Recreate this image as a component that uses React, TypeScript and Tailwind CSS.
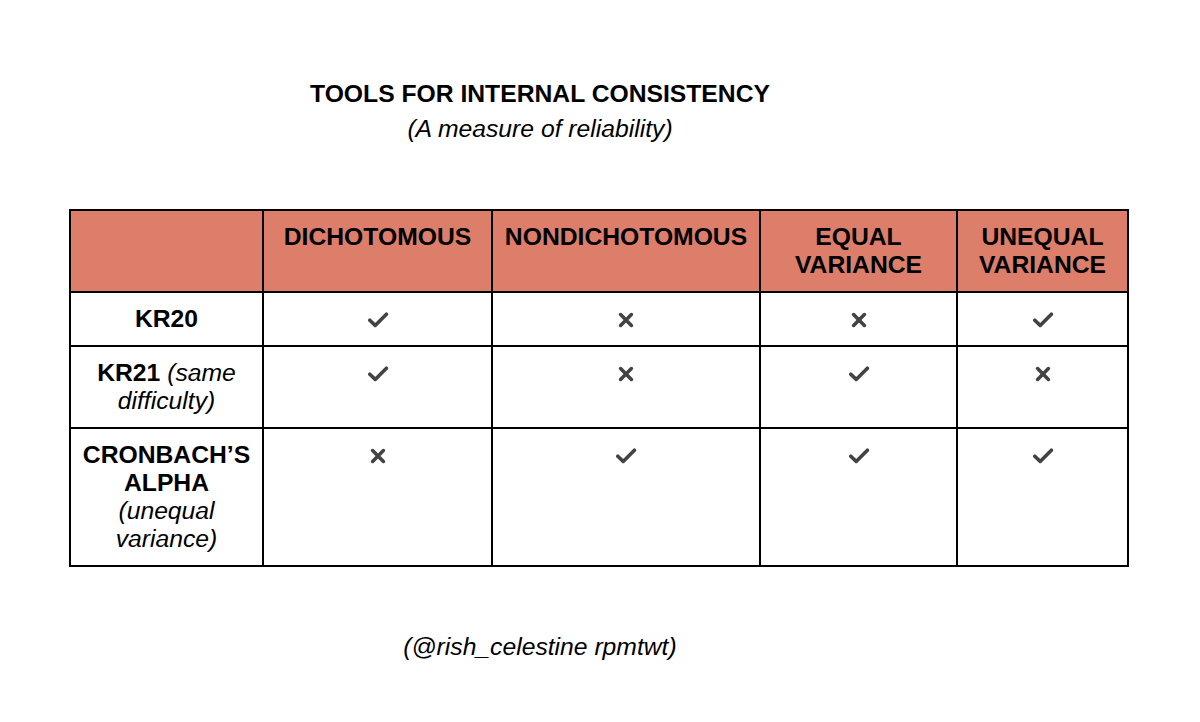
import React from "react";

const Check = () => (
  <svg width="22" height="16" viewBox="0 0 22 16" className="inline-block" aria-hidden>
    <polyline
      points="2.8,8.2 8.2,13.4 19.4,2.2"
      fill="none"
      stroke="#434343"
      strokeWidth="3.6"
      strokeLinecap="round"
      strokeLinejoin="round"
    />
  </svg>
);

const Cross = () => (
  <svg width="16" height="16" viewBox="0 0 16 16" className="inline-block" aria-hidden>
    <path d="M2.6 2.6 L13.4 13.4 M13.4 2.6 L2.6 13.4" stroke="#434343" strokeWidth="3.6" strokeLinecap="round" />
  </svg>
);

const Mark = ({ ok }: { ok: boolean }) => (
  <div className="h-[28px] flex items-center justify-center pt-[2px]">{ok ? <Check /> : <Cross />}</div>
);

const headCell = "bg-[#dd7e6b] px-[6px] pt-[12px] pb-[12px] text-center font-bold text-black";
const bodyCell = "bg-white px-[6px] pt-[12px] pb-[12px] text-center text-black";

const rows: { label: React.ReactNode; marks: boolean[] }[] = [
  { label: <span className="font-bold">KR20</span>, marks: [true, false, false, true] },
  {
    label: (
      <>
        <span className="font-bold">KR21</span> <span className="italic">(same</span>
        <br />
        <span className="italic">difficulty)</span>
      </>
    ),
    marks: [true, false, true, false],
  },
  {
    label: (
      <>
        <span className="font-bold">CRONBACH’S</span>
        <br />
        <span className="font-bold">ALPHA</span>
        <br />
        <span className="italic">(unequal</span>
        <br />
        <span className="italic">variance)</span>
      </>
    ),
    marks: [false, true, true, true],
  },
];

export default function App() {
  return (
    <div
      className="w-[1200px] h-[722px] bg-white text-black text-[24.7px] leading-[28px]"
      style={{ fontFamily: '"Liberation Sans", Arial, sans-serif' }}
    >
      <div className="pt-[80px] pr-[120px] text-center">
        <div className="font-bold">TOOLS FOR INTERNAL CONSISTENCY</div>
        <div className="italic mt-[7px]">(A measure of reliability)</div>
      </div>

      <div className="mt-[66px] ml-[69px] w-[1060px] bg-black p-[2px] grid grid-cols-[191px_227px_266px_195px_169px] gap-[2px]">
        <div className={headCell}></div>
        <div className={headCell}>DICHOTOMOUS</div>
        <div className={headCell}>NONDICHOTOMOUS</div>
        <div className={headCell}>
          EQUAL
          <br />
          VARIANCE
        </div>
        <div className={headCell}>
          UNEQUAL
          <br />
          VARIANCE
        </div>

        {rows.map((r, i) => (
          <React.Fragment key={i}>
            <div className={bodyCell}>{r.label}</div>
            {r.marks.map((m, j) => (
              <div key={j} className={bodyCell}>
                <Mark ok={m} />
              </div>
            ))}
          </React.Fragment>
        ))}
      </div>

      <div className="mt-[66px] pr-[120px] text-center italic">(@rish_celestine rpmtwt)</div>
    </div>
  );
}
